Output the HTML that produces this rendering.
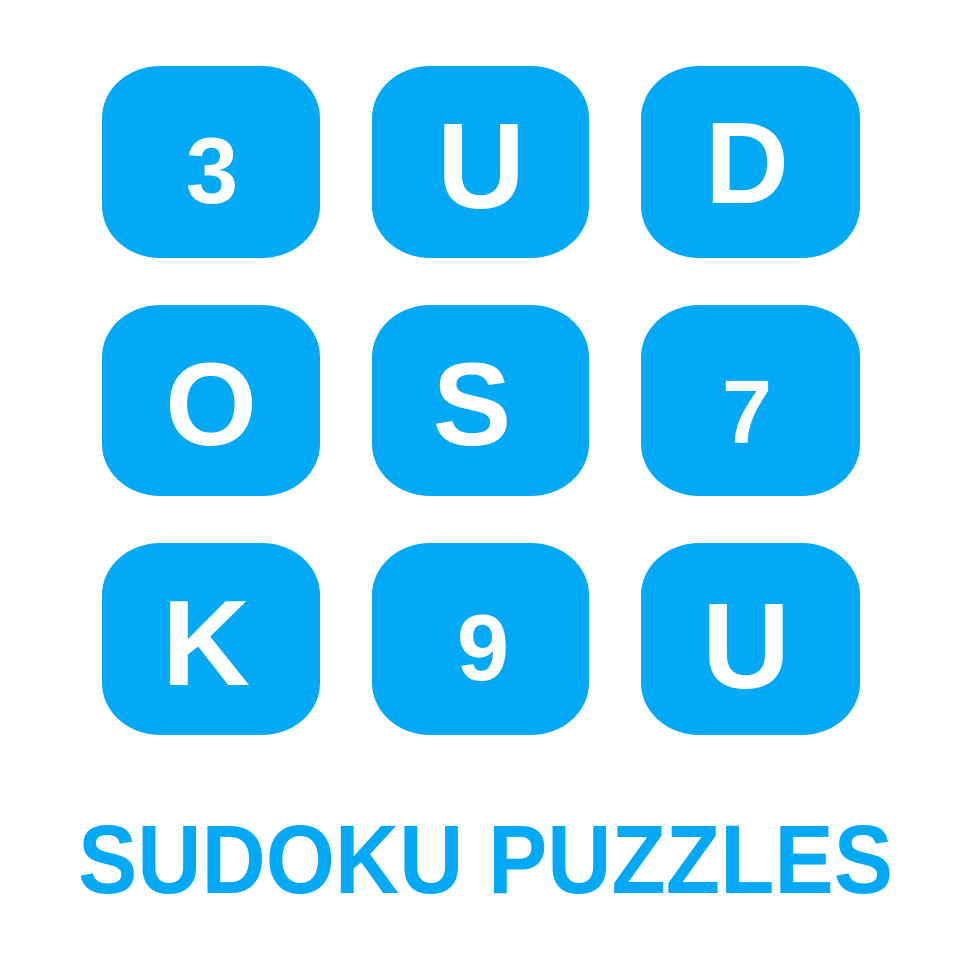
<!DOCTYPE html>
<html><head><style>html,body{margin:0;padding:0;background:#fff}svg{display:block}</style></head>
<body>
<svg width="980" height="980" viewBox="0 0 980 980" xmlns="http://www.w3.org/2000/svg">
<g fill="#03A9F4">
<rect x="102" y="66" width="218" height="192" rx="58" ry="52"/>
<rect x="372" y="66" width="217" height="192" rx="58" ry="52"/>
<rect x="641" y="66" width="219" height="192" rx="58" ry="52"/>
<rect x="102" y="305" width="218" height="191" rx="58" ry="52"/>
<rect x="372" y="305" width="217" height="191" rx="58" ry="52"/>
<rect x="641" y="305" width="219" height="191" rx="58" ry="52"/>
<rect x="102" y="543" width="218" height="192" rx="58" ry="52"/>
<rect x="372" y="543" width="217" height="192" rx="58" ry="52"/>
<rect x="641" y="543" width="219" height="192" rx="58" ry="52"/>
</g>
<g fill="#fff" font-family="Liberation Sans, sans-serif" font-weight="bold" text-anchor="middle">
<text x="212" y="203" font-size="94">3</text>
<text x="481" y="208" font-size="122">U</text>
<text x="747" y="203" font-size="116">D</text>
<text x="211" y="445" font-size="118">O</text>
<text x="472" y="445" font-size="118">S</text>
<text x="747" y="443" font-size="90">7</text>
<text x="206" y="685" font-size="122">K</text>
<text x="483" y="680" font-size="94">9</text>
<text x="746" y="688" font-size="122">U</text>
</g>
<text x="78" y="893" font-family="Liberation Sans, sans-serif" font-weight="bold" font-size="97" fill="#03A9F4" textLength="815" lengthAdjust="spacingAndGlyphs">SUDOKU PUZZLES</text>
</svg>
</body></html>
